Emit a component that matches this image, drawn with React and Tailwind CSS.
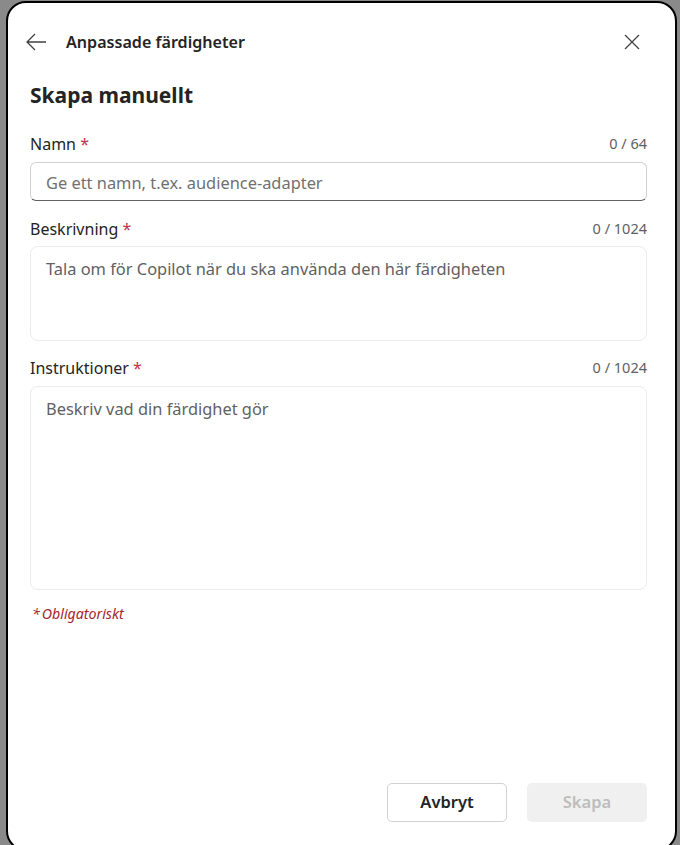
import React from "react";

const font = { fontFamily: '"Noto Sans", "Open Sans", sans-serif' };

function Label({ text, count }) {
  return (
    <div className="flex items-center justify-between h-[22px]">
      <span className="text-[16px] text-[#242424]">
        {text} <span className="text-[#c4314b]">*</span>
      </span>
      <span className="text-[14.5px] text-[#616161]">{count}</span>
    </div>
  );
}

export default function App() {
  return (
    <div className="h-[845px] w-[680px] overflow-hidden bg-[#8a8a8a]" style={font}>
      <div className="ml-[6px] mt-[1px] h-[850px] w-[671px] rounded-[20px] border-[2.5px] border-black bg-white pl-[22px] pr-[28px] flex flex-col">
        {/* header */}
        <div className="flex items-center h-[40px] mt-[19px] -ml-[5px]">
          <svg width="22" height="22" viewBox="0 0 22 22" fill="none" stroke="#424242" strokeWidth="1.3">
            <path d="M21 11H2M10 3L2 11l8 8" />
          </svg>
          <span className="ml-[19px] text-[16.1px] font-semibold text-[#242424]">Anpassade färdigheter</span>
          <div className="flex-1" />
          <svg width="18" height="18" viewBox="0 0 18 18" stroke="#424242" strokeWidth="1.3" className="mr-[6px]">
            <path d="M2 2l14 14M16 2L2 16" />
          </svg>
        </div>

        <h1 className="mt-[18px] text-[21px] font-bold text-[#242424] leading-[30px]">Skapa manuellt</h1>

        <div className="mt-[23px]">
          <Label text="Namn" count="0 / 64" />
          <div className="mt-[7px] h-[39px] rounded-[6px] border border-[#d1d1d1] border-b-[#616161] flex items-center px-[15px] pt-[3px]">
            <span className="text-[16.4px] text-[#707070]">Ge ett namn, t.ex. audience-adapter</span>
          </div>
        </div>

        <div className="mt-[17px]">
          <Label text="Beskrivning" count="0 / 1024" />
          <div className="mt-[6px] h-[95px] rounded-[8px] border border-[#ebebeb] px-[15px] pt-[10px]">
            <span className="text-[16.4px] text-[#616161]">Tala om för Copilot när du ska använda den här färdigheten</span>
          </div>
        </div>

        <div className="mt-[16px]">
          <Label text="Instruktioner" count="0 / 1024" />
          <div className="mt-[7px] h-[204px] rounded-[8px] border border-[#ebebeb] px-[15px] pt-[10px]">
            <span className="text-[16.4px] text-[#616161]">Beskriv vad din färdighet gör</span>
          </div>
        </div>

        <div className="mt-[13px] ml-[2px] text-[14.2px] italic text-[#a4262c]">
          *<span className="ml-[2px]">Obligatoriskt</span>
        </div>

        <div className="mt-[159px] flex justify-end gap-[20px]">
          <button className="h-[39px] w-[120px] rounded-[5px] border border-[#d1d1d1] bg-white text-[16.5px] font-semibold text-[#242424]">
            Avbryt
          </button>
          <button className="h-[39px] w-[120px] rounded-[5px] bg-[#f0f0f0] text-[16.5px] font-semibold text-[#bdbdbd]">
            Skapa
          </button>
        </div>
      </div>
    </div>
  );
}
